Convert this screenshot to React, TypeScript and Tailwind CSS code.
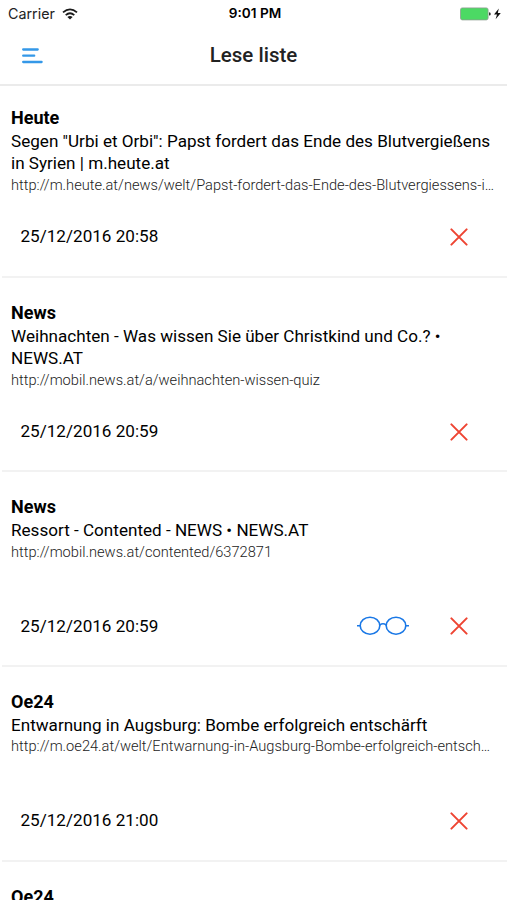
type Item = {
  source: string;
  title?: string;
  url?: string;
  date?: string;
  unread?: boolean;
};

const items: Item[] = [
  {
    source: 'Heute',
    title: 'Segen "Urbi et Orbi": Papst fordert das Ende des Blutvergießens in Syrien | m.heute.at',
    url: 'http://m.heute.at/news/welt/Papst-fordert-das-Ende-des-Blutvergiessens-i…',
    date: '25/12/2016 20:58',
  },
  {
    source: 'News',
    title: 'Weihnachten - Was wissen Sie über Christkind und Co.? • NEWS.AT',
    url: 'http://mobil.news.at/a/weihnachten-wissen-quiz',
    date: '25/12/2016 20:59',
  },
  {
    source: 'News',
    title: 'Ressort - Contented - NEWS • NEWS.AT',
    url: 'http://mobil.news.at/contented/6372871',
    date: '25/12/2016 20:59',
    unread: true,
  },
  {
    source: 'Oe24',
    title: 'Entwarnung in Augsburg: Bombe erfolgreich entschärft',
    url: 'http://m.oe24.at/welt/Entwarnung-in-Augsburg-Bombe-erfolgreich-entsch…',
    date: '25/12/2016 21:00',
  },
  { source: 'Oe24' },
];

const Wifi = () => (
  <svg width="16" height="12" viewBox="0 0 16 12" fill="none" stroke="#1a1a1a" strokeWidth="1.8">
    <path d="M1 4.4Q8 -1.6 15 4.4M3.7 7.1Q8 3.5 12.3 7.1" />
    <path d="M8 11.6L5.4 8.9Q8 7 10.6 8.9Z" fill="#1a1a1a" stroke="none" />
  </svg>
);

const Battery = () => (
  <svg width="42" height="14" viewBox="0 0 42 14">
    <rect x="0.5" y="0.9" width="27.6" height="12" rx="1.8" fill="#4cd964" stroke="#8d9d90" strokeWidth="0.8" />
    <path d="M29 5.2Q30.8 5.4 30.8 6.9T29 8.6Z" fill="#333" />
    <path d="M38.8 1.5L34 7.6H37L35.6 12.3L40.8 6H37.8Z" fill="#111" />
  </svg>
);

const MenuIcon = () => (
  <svg width="21" height="16" viewBox="0 0 21 16" stroke="#3498e8" strokeWidth="2.3" strokeLinecap="round">
    <path d="M1.2 1.5H15.7M1.2 7.7H12.2M1.2 14H19.6" />
  </svg>
);

const Glasses = () => (
  <svg width="52" height="20" viewBox="0 0 52 20" fill="none" stroke="#1a78e6" strokeWidth="1.6">
    <ellipse cx="13" cy="9.7" rx="9.8" ry="8.5" />
    <ellipse cx="39" cy="9.7" rx="9.8" ry="8.5" />
    <path d="M0 9.7H3.2M22.8 9Q26 6.6 29.2 9M48.8 9.7H52" />
  </svg>
);

const Cross = () => (
  <svg width="18" height="18" viewBox="0 0 18 18" stroke="#ee4432" strokeWidth="2" strokeLinecap="round">
    <path d="M1.4 1.4L16.6 16.6M16.6 1.4L1.4 16.6" />
  </svg>
);

const ListItem = ({ item }: { item: Item }) => (
  <li className="h-[194.7px] pt-[23px]">
    <div className="h-[116px] px-[11px]">
      <h2 className="text-[18px] leading-[24px] font-bold">{item.source}</h2>
      <p className="text-[17.1px] leading-[22.4px]">{item.title}</p>
      <p className="text-[14.64px] leading-[20px] font-light whitespace-nowrap text-[#222]">{item.url}</p>
    </div>
    {item.date && (
      <>
        <div className="flex h-[30px] items-center pr-[39px] pl-[20.5px] text-[17.1px]">
          <span className="flex-1">{item.date}</span>
          {item.unread && <Glasses />}
          <button className="ml-[41px]">
            <Cross />
          </button>
        </div>
        <div className="mt-[23.5px] ml-[2px] h-[2px] bg-[#f2f2f2]" />
      </>
    )}
  </li>
);

const App = () => {
  return (
    <main className="flex h-[900px] w-[507px] flex-col overflow-hidden bg-white font-[Roboto,sans-serif] text-black">
      <div className="flex h-[27px] shrink-0 items-center pr-[5px] pl-[8px] font-[Inter,sans-serif] text-[14px]">
        <div className="flex flex-1 items-center gap-[7px] text-[#222]">
          <span className="text-[14.3px]">Carrier</span>
          <Wifi />
        </div>
        <span className="text-[13.6px] font-semibold">9:01 PM</span>
        <div className="flex flex-1 justify-end">
          <Battery />
        </div>
      </div>
      <header className="flex h-[59px] shrink-0 items-center border-b-2 border-[#ebebeb] px-[22px]">
        <button className="w-[40px]">
          <MenuIcon />
        </button>
        <h1 className="flex-1 text-center text-[20.5px] font-medium text-[#222]">Lese liste</h1>
        <div className="w-[40px]" />
      </header>
      <ul className="-mt-[3px]">
        {items.map((item, i) => (
          <ListItem key={i} item={item} />
        ))}
      </ul>
    </main>
  );
};

export default App;
